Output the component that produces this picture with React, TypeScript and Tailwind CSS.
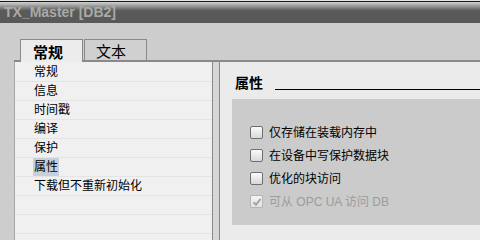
import React from "react";

const navItems = ["常规", "信息", "时间戳", "编译", "保护", "属性", "下载但不重新初始化", "", "", ""];

const options = [
    { label: "仅存储在装载内存中", checked: false, disabled: false },
    { label: "在设备中写保护数据块", checked: false, disabled: false },
    { label: "优化的块访问", checked: false, disabled: false },
    { label: "可从 OPC UA 访问 DB", checked: true, disabled: true },
];

const font = "font-['Liberation_Sans','Noto_Sans_CJK_SC',sans-serif]";

function CheckBox({ checked, disabled }: { checked: boolean; disabled: boolean }) {
    return (
        <div
            className={`w-[13px] h-[13px] rounded-[2px] border flex items-center justify-center ${
                disabled
                    ? "border-[#b4b4b4] bg-[linear-gradient(#f6f6f6,#e2e2e2)]"
                    : "border-[#6e6e6e] bg-[linear-gradient(#fbfbfb,#d8d8d8)]"
            }`}
        >
            {checked && (
                <svg width="10" height="10" viewBox="0 0 10 10">
                    <path d="M1.5 5.2 L4 7.8 L8.6 1.8" fill="none" stroke="#a4a4a4" strokeWidth="2" />
                </svg>
            )}
        </div>
    );
}

export default function App() {
    return (
        <div className={`w-[480px] h-[240px] overflow-hidden bg-[#cdcdcd] flex flex-col ${font}`}>
            {/* Title bar */}
            <div className="h-[1px] bg-[#e4e4e4]" />
            <div className="h-[1px] bg-[#1a1a1a]" />
            <div className="h-[21px] bg-[linear-gradient(#d2d2d2_0px,#9a9a9a_4px,#626262_8px,#5a5a5a_9px,#595959_100%)] pl-[4px] flex items-end pb-[4px]">
                <span className="text-[14px] leading-none font-bold text-[#a9a9a9]">TX_Master [DB2]</span>
            </div>

            {/* Tabs */}
            <div className="flex pl-[20px] pt-[16px] gap-[1px] relative z-10">
                <div className="w-[63px] h-[23px] -mb-[2px] border border-b-0 border-[#8a8a8a] bg-[#ececec] pl-[12px] pt-[2px] text-[15px] font-bold text-black">
                    常规
                </div>
                <div className="w-[63px] h-[21px] border border-b-0 border-[#8a8a8a] bg-[#d0d0d0] pl-[11px] pt-[1px] text-[15px] text-black">
                    文本
                </div>
            </div>

            {/* Content */}
            <div className="flex-1 flex ml-[14px] border-t-2 border-[#8a8a8a] min-h-0">
                <div className="w-[199px] bg-[#f0f0f0] border-l border-[#a8a8a8] border-r border-r-[#8a8a8a] pt-[1px]">
                    {navItems.map((item, i) => (
                        <div key={i} className="h-[19px] border-b border-[#e4e4e4] pl-[18px] flex items-center">
                            {item && (
                                <span
                                    className={`text-[12px] leading-[18px] text-black px-[1px] ${
                                        item === "属性" ? "bg-[#c6d0da]" : ""
                                    }`}
                                >
                                    {item}
                                </span>
                            )}
                        </div>
                    ))}
                </div>
                <div className="w-[6px] bg-[#d6d6d6]" />
                <div className="flex-1 bg-[#ebebeb] border-l border-[#8a8a8a] pl-[12px] pt-[13px]">
                    <div className="flex items-end pl-[3px]">
                        <span className="text-[14px] font-bold leading-[16px] text-black">属性</span>
                        <div className="flex-1 ml-[12px] mb-[1px] h-px bg-black" />
                    </div>
                    <div className="mt-[8px] h-[126px] bg-[#cbcbcb] pl-[18px] pt-[27px] flex flex-col gap-[10px]">
                        {options.map((o) => (
                            <div key={o.label} className="flex items-center h-[13px] gap-[6px]">
                                <CheckBox checked={o.checked} disabled={o.disabled} />
                                <span className={`text-[12px] leading-none ${o.disabled ? "text-[#9c9c9c]" : "text-black"}`}>
                                    {o.label}
                                </span>
                            </div>
                        ))}
                    </div>
                </div>
            </div>
        </div>
    );
}
